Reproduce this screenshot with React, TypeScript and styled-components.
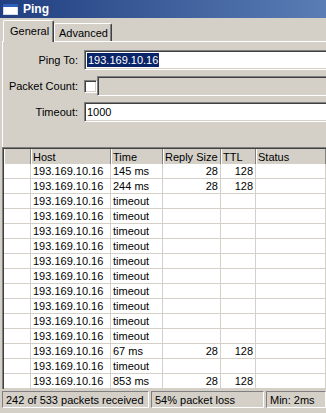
import styled, { createGlobalStyle } from "styled-components";

const GlobalStyle = createGlobalStyle`
  html, body {
    margin: 0;
    padding: 0;
    background: #d4d0c8;
  }
  body {
    font-family: "Liberation Sans", Arial, sans-serif;
    font-size: 11px;
    color: #000;
  }
`;

const Window = styled.div`
  width: 326px;
  height: 413px;
  overflow: hidden;
  display: flex;
  flex-direction: column;
  background: #d4d0c8;
`;

const TitleBar = styled.div`
  height: 18px;
  flex: none;
  display: flex;
  align-items: center;
  gap: 5px;
  padding-left: 3px;
  background: linear-gradient(90deg, #213f80 0%, #5a7db5 100%);
  color: #fff;
  font-weight: bold;
  font-size: 12px;
`;

const Body = styled.div`
  flex: 1;
  display: flex;
  flex-direction: column;
  padding-left: 2px;
  min-height: 0;
`;

const TabStrip = styled.div`
  height: 23px;
  flex: none;
  display: flex;
  align-items: flex-end;
  padding-left: 1px;
`;

const Tab = styled.div<{ $active?: boolean; $w: number }>`
  position: relative;
  z-index: ${(p) => (p.$active ? 2 : 1)};
  box-sizing: border-box;
  width: ${(p) => p.$w}px;
  height: ${(p) => (p.$active ? 22 : 18)}px;
  margin-bottom: ${(p) => (p.$active ? -1 : 0)}px;
  padding: ${(p) => (p.$active ? "4px 0 0 6px" : "3px 0 0 4px")};
  background: #d4d0c8;
  border-top: 1px solid #fff;
  border-left: 1px solid #fff;
  border-right: 1px solid #404040;
  box-shadow: inset -1px 0 #808080;
  border-radius: 2px 2px 0 0;
  font-size: 11px;
  white-space: nowrap;
`;

const Panel = styled.div`
  flex: none;
  border-top: 1px solid #fff;
  border-left: 1px solid #fff;
  padding: 8px 0 25px 0;
`;

const Form = styled.div`
  display: grid;
  grid-template-columns: 75px 1fr;
  grid-auto-rows: 20px;
  column-gap: 6px;
  row-gap: 6px;
`;

const Label = styled.div`
  display: flex;
  align-items: center;
  justify-content: flex-end;
  font-size: 11px;
  white-space: nowrap;
`;

const Field = styled.div<{ $disabled?: boolean }>`
  box-sizing: border-box;
  height: 20px;
  width: ${(p) => (p.$disabled ? "auto" : "260px")};
  flex: ${(p) => (p.$disabled ? 1 : "none")};
  display: flex;
  align-items: center;
  padding-left: 2px;
  background: ${(p) => (p.$disabled ? "#d4d0c8" : "#fff")};
  border-top: 1px solid #808080;
  border-left: 1px solid #808080;
  border-bottom: 1px solid #fff;
  border-right: 1px solid #fff;
  box-shadow: inset 1px 1px #404040, inset -1px -1px #d4d0c8;
  font-size: 11px;
`;

const Selected = styled.span`
  background: #0a246a;
  color: #fff;
  padding: 1px 1px;
`;

const CheckRow = styled.div`
  display: flex;
  align-items: center;
  width: 260px;
`;

const CheckBox = styled.div`
  box-sizing: border-box;
  width: 13px;
  height: 13px;
  flex: none;
  background: #fff;
  border-top: 1px solid #808080;
  border-left: 1px solid #808080;
  border-bottom: 1px solid #fff;
  border-right: 1px solid #fff;
  box-shadow: inset 1px 1px #404040, inset -1px -1px #d4d0c8;
`;

const TableFrame = styled.div`
  flex: none;
  border-top: 1px solid #808080;
  border-left: 1px solid #808080;
  box-shadow: inset 1px 1px #404040;
  padding: 1px 0 0 1px;
  background: #fff;
`;

const Grid = styled.div`
  display: grid;
  grid-template-columns: 27px 80px 52px 58px 35px 1fr;
  grid-auto-rows: 15px;
`;

const HeadCell = styled.div`
  box-sizing: border-box;
  height: 16px;
  padding-left: 2px;
  background: #d4d0c8;
  border-right: 1px solid #808080;
  box-shadow: inset 1px 0 #fff;
  display: flex;
  align-items: center;
  font-size: 11px;
  white-space: nowrap;
`;

const Line = styled.div`
  display: contents;
`;

const Cell = styled.div<{ $right?: boolean }>`
  box-sizing: border-box;
  height: 15px;
  display: flex;
  align-items: center;
  justify-content: ${(p) => (p.$right ? "flex-end" : "flex-start")};
  padding: ${(p) => (p.$right ? "0 2px 0 0" : "0 0 0 2px")};
  border-right: 1px solid #d4d0c8;
  border-bottom: 1px solid #d4d0c8;
  background: #fff;
  font-size: 11px;
  white-space: nowrap;
`;

const StatusBar = styled.div`
  flex: 1;
  display: flex;
  gap: 2px;
  padding-top: 2px;
`;

const StatusBox = styled.div<{ $w?: number }>`
  box-sizing: border-box;
  height: 17px;
  width: ${(p) => (p.$w ? `${p.$w}px` : "auto")};
  flex: ${(p) => (p.$w ? "none" : 1)};
  padding-left: 3px;
  display: flex;
  align-items: center;
  border-top: 1px solid #808080;
  border-left: 1px solid #808080;
  border-bottom: 1px solid #fff;
  border-right: 1px solid #fff;
  font-size: 11px;
  white-space: nowrap;
`;

const WindowIcon = () => (
  <svg width="15" height="11" viewBox="0 0 15 11">
    <rect x="0.5" y="0.5" width="14" height="10" fill="#fff" stroke="#d8dce8" />
    <rect x="0" y="0" width="15" height="3" fill="#2f5fb8" />
  </svg>
);

type Row = { time: string; size?: string; ttl?: string };

const rows: Row[] = [
  { time: "145 ms", size: "28", ttl: "128" },
  { time: "244 ms", size: "28", ttl: "128" },
  ...Array.from({ length: 10 }, () => ({ time: "timeout" })),
  { time: "67 ms", size: "28", ttl: "128" },
  { time: "timeout" },
  { time: "853 ms", size: "28", ttl: "128" },
];

const App = (): JSX.Element => {
  return (
    <Window>
      <GlobalStyle />
      <TitleBar>
        <WindowIcon />
        <span>Ping</span>
      </TitleBar>
      <Body>
        <TabStrip>
          <Tab $active $w={51}>General</Tab>
          <Tab $w={58}>Advanced</Tab>
        </TabStrip>
        <Panel>
          <Form>
            <Label>Ping To:</Label>
            <Field>
              <Selected>193.169.10.16</Selected>
            </Field>
            <Label>Packet Count:</Label>
            <CheckRow>
              <CheckBox />
              <Field $disabled />
            </CheckRow>
            <Label>Timeout:</Label>
            <Field>1000</Field>
          </Form>
        </Panel>
        <TableFrame>
          <Grid>
            <Line>
              <HeadCell />
              <HeadCell>Host</HeadCell>
              <HeadCell>Time</HeadCell>
              <HeadCell>Reply Size</HeadCell>
              <HeadCell>TTL</HeadCell>
              <HeadCell>Status</HeadCell>
            </Line>
            {rows.map((r, i) => (
              <Line key={i}>
                <Cell />
                <Cell>193.169.10.16</Cell>
                <Cell>{r.time}</Cell>
                <Cell $right>{r.size}</Cell>
                <Cell $right>{r.ttl}</Cell>
                <Cell />
              </Line>
            ))}
          </Grid>
        </TableFrame>
        <StatusBar>
          <StatusBox $w={147}>242 of 533 packets received</StatusBox>
          <StatusBox $w={113}>54% packet loss</StatusBox>
          <StatusBox>Min: 2ms</StatusBox>
        </StatusBar>
      </Body>
    </Window>
  );
};

export default App;
